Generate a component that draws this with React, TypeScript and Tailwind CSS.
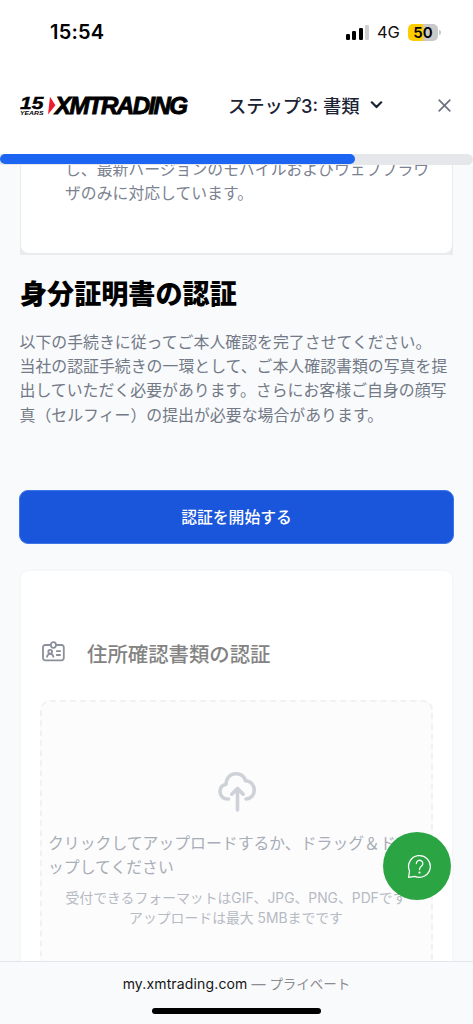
import { ReactNode } from 'react'
import { clsx } from 'clsx'

const bars = ['h-[6px]', 'h-[9px]', 'h-[12px]', 'h-[15px]']

const verificationLines = [
  '以下の手続きに従ってご本人確認を完了させてください。',
  '当社の認証手続きの一環として、ご本人確認書類の写真を提',
  '出していただく必要があります。さらにお客様ご自身の顔写',
  '真（セルフィー）の提出が必要な場合があります。',
]

function StatusBar() {
  return (
    <div className="flex h-16 shrink-0 items-center justify-between pl-[50px] pr-[32px]">
      <span className="text-[20px] font-semibold leading-none tracking-[0.2px] text-black">15:54</span>
      <div className="flex items-center">
        <div className="flex items-end gap-[2.5px]">
          {bars.map((height, i) => (
            <span
              key={height}
              className={clsx('w-[4px] rounded-[1.2px]', height, i === 3 ? 'bg-[#cfcfcf]' : 'bg-black')}
            />
          ))}
        </div>
        <span className="ml-[8px] w-[23px] text-[16.5px] leading-none tracking-[-0.1px] text-[#111]">4G</span>
        <div className="ml-[8px] flex h-[17px] w-[30px] items-center justify-center rounded-[5px] bg-[linear-gradient(90deg,#ffcc00_50%,#c9c9c9_50%)]">
          <span className="text-[15px] font-semibold leading-none text-black">50</span>
        </div>
        <span className="ml-px h-[5px] w-[2px] rounded-r-full bg-[#c9c9c9]" />
      </div>
    </div>
  )
}

function Logo() {
  return (
    <svg width="169" height="20" viewBox="0 0 169 20" className="shrink-0 overflow-visible">
      <g fontFamily="'Liberation Sans', sans-serif" fontStyle="italic" fontWeight="700" fill="#000">
        <text x="0" y="12.8" fontSize="16.5" stroke="#000" strokeWidth="0.4" textLength="23.5" lengthAdjust="spacingAndGlyphs">15</text>
        <text x="0" y="18.9" fontSize="6.2" textLength="23.5" lengthAdjust="spacingAndGlyphs">YEARS</text>
        <text
          x="35"
          y="18"
          fontSize="24"
          letterSpacing="-1.6"
          stroke="#000"
          strokeWidth="0.9"
          textLength="131.5"
          lengthAdjust="spacingAndGlyphs"
        >
          XMTRADING
        </text>
      </g>
      <path d="M30 .8 35.4 9.2 28 18.5Z" fill="#ed1c2e" />
    </svg>
  )
}

function Header() {
  return (
    <header className="flex h-[90px] shrink-0 items-center pl-[20px] pr-[22px] pb-[7px]">
      <Logo />
      <div className="ml-[39px] flex items-center text-[#1b2434]">
        <span className="whitespace-nowrap pt-px text-[18.3px] font-medium leading-none">ステップ3: 書類</span>
        <svg width="13" height="8" viewBox="0 0 12 8" fill="none" stroke="currentColor" strokeWidth="2.2" strokeLinecap="round" strokeLinejoin="round" className="ml-[10px]">
          <path d="m1.3 1.3 4.7 4.8 4.7-4.8" />
        </svg>
      </div>
      <svg width="13" height="13" viewBox="0 0 13 13" fill="none" stroke="#6b7280" strokeWidth="1.7" strokeLinecap="round" className="ml-auto">
        <path d="m1.2 1.2 10.6 10.6M11.8 1.2 1.2 11.8" />
      </svg>
    </header>
  )
}

function IdBadgeIcon() {
  return (
    <svg width="24" height="22" viewBox="0 0 24 22" fill="none" stroke="#8b909c" strokeWidth="1.8" strokeLinecap="round" strokeLinejoin="round">
      <path d="M9.5 4H4.2A2.2 2.2 0 0 0 2 6.200v10.900a2.200 2.200 0 0 0 2.200 2.200h16.400a2.200 2.200 0 0 0 2.200-2.200V6.200A2.200 2.200 0 0 0 20.600 4H15.300" />
      <rect x="9.900" y="1.200" width="5" height="5.600" rx="2.500" />
      <circle cx="9.200" cy="10.700" r="1.900" />
      <path d="M6 15.800c.4-1.900 1.600-2.900 3.200-2.900s2.800 1 3.200 2.900M15.800 10.200h3.300M15.800 14h3.300" />
    </svg>
  )
}

function UploadIcon() {
  return (
    <svg width="38" height="42" viewBox="0 0 38 42" fill="none" stroke="#ced1d8" strokeWidth="3.600" strokeLinecap="round" strokeLinejoin="round">
      <path d="M10.500 29C5.500 29.300 2 26 2 21.600c0-4 2.600-6.600 6-7.300C8.400 7.500 12.700 3.700 18 3.700c4.800 0 8.300 2.900 9.500 7.100 5.300.2 8.700 4.300 8.700 9.200 0 5-3.300 8.700-8.200 9" />
      <path d="M19.500 40V19M13.800 24.200l5.700-5.700 5.700 5.700" />
    </svg>
  )
}

function HelpButton() {
  return (
    <button className="absolute left-[383px] top-[832px] flex size-[68px] items-center justify-center rounded-full bg-[#2ba544] pl-[5px]">
      <svg width="25" height="25" viewBox="0 0 26 26" fill="none" stroke="#fff" strokeWidth="1.300" strokeLinecap="round" strokeLinejoin="round">
        <path d="M1.700 24.200 2.600 17.500A11.300 11.300 0 1 1 8.200 23.200Z" />
        <path d="M9.700 10a3.400 3.400 0 1 1 5.500 2.600c-1.300 1-2.200 1.500-2.200 3.600" />
        <circle cx="13" cy="19.300" r=".5" fill="#fff" />
      </svg>
    </button>
  )
}

function Card({ children, className }: { children: ReactNode; className?: string }) {
  return <section className={clsx('mx-[19px] border-2 bg-white', className)}>{children}</section>
}

export default function App() {
  return (
    <div className="relative flex h-[1024px] w-[473px] flex-col overflow-hidden bg-white font-[Inter,'Noto_Sans_CJK_JP',sans-serif]">
      <StatusBar />
      <Header />

      {/* Progress */}
      <div className="h-[11px] shrink-0">
        <div className="h-[10.5px] rounded-r-full bg-[#e5e7eb]">
          <div className="h-[10px] w-[355px] rounded-full bg-[#1c64f2]" />
        </div>
      </div>

      <main className="flex min-h-0 flex-1 flex-col overflow-hidden bg-[#f9fafb]">
        <div className="mx-[20px] h-[90px] shrink-0 bg-[#e9ebed] px-px pb-[2px]">
          <div className="flex h-full flex-col justify-end overflow-hidden rounded-b-[8px] bg-white pb-[47px] pl-[44px] text-[15.85px] leading-[24.2px] text-[#7b8290]">
            <p className="whitespace-nowrap">し、最新バージョンのモバイルおよびウェブブラウ</p>
            <p className="whitespace-nowrap">ザのみに対応しています。</p>
          </div>
        </div>

        <h1 className="mt-[23px] shrink-0 pl-[20px] text-[27.1px] font-black leading-[34px] text-black">身分証明書の認証</h1>
        <div className="mt-[19px] shrink-0 pl-[19.5px] text-[15.9px] leading-[24.2px] text-[#727987]">
          {verificationLines.map((line) => (
            <p key={line} className="whitespace-nowrap">{line}</p>
          ))}
        </div>

        <button className="mx-[19px] mt-[62px] h-[54px] shrink-0 rounded-[9px] border border-[#3f75e6] bg-[#1a56db] pt-[2px] text-[15.8px] font-medium text-white">
          認証を開始する
        </button>

        <Card className="mt-[25px] h-[460px] shrink-0 rounded-[10px] border-[#f5f7f9] px-[19px] pt-[70px]">
          <div className="flex h-[28px] items-center gap-[22px] pl-px">
            <div className="pb-[6px]">
              <IdBadgeIcon />
            </div>
            <h2 className="text-[20.4px] font-medium leading-[28px] text-[#838383]">住所確認書類の認証</h2>
          </div>
          <div className="mt-[31px] flex h-[340px] flex-col items-center rounded-[10px] border-2 border-dashed border-[#f0f1f3] bg-[#fcfcfd] pt-[68px]">
            <UploadIcon />
            <div className="mt-[20px] w-full pl-[6px] text-[15.85px] leading-[24.3px] text-[#a8adb7]">
              <p className="whitespace-nowrap">クリックしてアップロードするか、ドラッグ＆ドロ</p>
              <p className="whitespace-nowrap">ップしてください</p>
            </div>
            <div className="mt-[9px] whitespace-nowrap pr-px text-center text-[13.85px] leading-[19.6px] text-[#b6bac3]">
              <p>受付できるフォーマットはGIF、JPG、PNG、PDFです</p>
              <p>アップロードは最大 5MBまでです</p>
            </div>
          </div>
        </Card>
      </main>

      <footer className="flex h-[63px] shrink-0 flex-col items-center border-t border-[#e2e5e9] bg-[#f9fafb] pt-[12px]">
        <p className="whitespace-nowrap text-[14px] leading-[20px] text-[#8a8c90]">
          <span className="tracking-[0.15px] text-[#151515]">my.xmtrading.com</span> — <span className="text-[13.5px]">プライベート</span>
        </p>
        <span className="mt-[14px] h-[6px] w-[169px] rounded-full bg-black" />
      </footer>

      <HelpButton />
    </div>
  )
}
